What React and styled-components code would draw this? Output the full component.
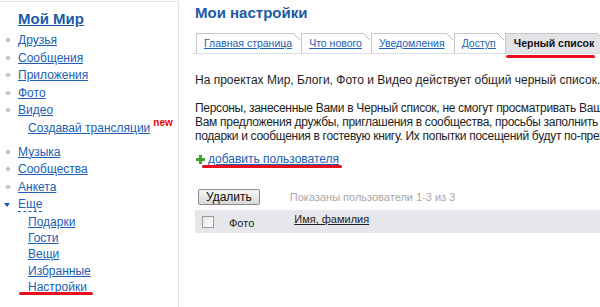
import React from "react";
import styled, { createGlobalStyle } from "styled-components";

const GlobalStyle = createGlobalStyle`
  html, body {
    margin: 0;
    padding: 0;
    background: #fff;
    overflow: hidden;
  }
  body {
    font-family: "Liberation Sans", Arial, sans-serif;
    color: #222;
  }
`;

const Page = styled.div`
  display: flex;
  width: 600px;
  height: 307px;
  overflow: hidden;
`;

const Sidebar = styled.div`
  position: relative;
  flex: 0 0 179px;
  margin-top: 1px;
  border-top: 1px solid #e2e2e2;
  border-right: 1px solid #e2e2e2;
  padding: 7px 0 0 18px;
  box-sizing: border-box;
`;

const Logo = styled.a`
  display: inline-block;
  font-size: 15px;
  font-weight: bold;
  color: #1b5aa6;
  text-decoration: underline;
  line-height: 20px;
  margin-bottom: 3px;
`;

const NavList = styled.ul`
  list-style: none;
  margin: ${(p) => p.$top || 0}px 0 0;
  padding: 0;
`;

const NavItem = styled.li`
  position: relative;
  height: 17.6px;
  line-height: 17.6px;
  font-size: 12px;
  &::before {
    content: "";
    position: absolute;
    left: -12px;
    top: 6px;
    width: 4px;
    height: 4px;
    background: #c4c4c4;
    transform: rotate(45deg);
  }
`;

const MoreItem = styled.li`
  position: relative;
  height: 17.6px;
  line-height: 17.6px;
  font-size: 12px;
  &::before {
    content: "";
    position: absolute;
    left: -14px;
    top: 7px;
    border-left: 3.5px solid transparent;
    border-right: 3.5px solid transparent;
    border-top: 4px solid #1b5aa6;
  }
`;

const SubList = styled.ul`
  list-style: none;
  margin: 0;
  padding: 0 0 0 10px;
`;

const SubItem = styled.li`
  position: relative;
  height: ${(p) => p.$h || 16.2}px;
  line-height: ${(p) => p.$h || 16.2}px;
  font-size: 12px;
  white-space: nowrap;
`;

const NavLink = styled.a`
  color: #2160b4;
  text-decoration: underline;
`;

const DashedLink = styled.a`
  color: #2160b4;
  text-decoration: none;
  border-bottom: 1px dashed #2160b4;
`;

const NewBadge = styled.span`
  position: relative;
  top: -6px;
  margin-left: 3px;
  color: #e00;
  font-weight: bold;
  font-size: 10px;
`;

const RedMark = styled.span`
  position: absolute;
  left: ${(p) => p.$left}px;
  top: ${(p) => p.$top}px;
  width: ${(p) => p.$width}px;
  height: 3px;
  border-radius: 2px;
  background: #e8101c;
`;

const Main = styled.div`
  flex: 1;
  min-width: 0;
  overflow: hidden;
  padding: 3px 0 0 16px;
`;

const Title = styled.h1`
  margin: 0;
  font-size: 15px;
  font-weight: bold;
  line-height: 20px;
  color: #1b5aa6;
`;

const TabBar = styled.div`
  display: flex;
  align-items: flex-end;
  margin: 10px 0 0 -3px;
  padding-left: 4px;
  border-bottom: 1px solid #dcdcdc;
  white-space: nowrap;
`;

const Tab = styled.a`
  position: relative;
  display: block;
  height: 19px;
  line-height: 19px;
  padding: 0 ${(p) => (p.$active ? 9 : 7)}px 0 ${(p) => (p.$active ? 8 : 7)}px;
  margin-right: 2px;
  border-top: 1px solid #c8c8c8;
  border-left: 1px solid #c8c8c8;
  background: ${(p) => (p.$active ? "#e3e4e8" : "#fff")};
  font-size: 10.5px;
  font-weight: ${(p) => (p.$active ? "bold" : "normal")};
  color: ${(p) => (p.$active ? "#111" : "#2160b4")};
  text-decoration: ${(p) => (p.$active ? "none" : "underline")};
  &::after {
    content: "";
    position: absolute;
    top: -1px;
    right: -1px;
    width: 7px;
    height: 7px;
    background: linear-gradient(
      to bottom left,
      #fff calc(50% - 0.7px),
      #b8b8b8 calc(50% - 0.7px),
      #b8b8b8 calc(50% + 0.7px),
      transparent calc(50% + 0.7px)
    );
  }
  &::before {
    content: "";
    display: ${(p) => (p.$active ? "block" : "none")};
    position: absolute;
    left: 0;
    right: 8px;
    bottom: -5px;
    height: 3px;
    border-radius: 2px;
    background: #e8101c;
  }
`;

const Text = styled.p`
  margin: ${(p) => p.$top || 0}px 0 0;
  font-size: 12px;
  line-height: 14px;
  letter-spacing: ${(p) => p.$spacing || 0}px;
  white-space: nowrap;
  color: #1e1e1e;
`;

const AddRow = styled.div`
  position: relative;
  display: flex;
  align-items: center;
  margin-top: 8px;
  height: 16px;
  font-size: 12px;
`;

const PlusIcon = styled.span`
  position: relative;
  width: 9px;
  height: 9px;
  margin: 0 3px 0 1px;
  &::before,
  &::after {
    content: "";
    position: absolute;
    background: #3aa52e;
  }
  &::before {
    left: 3px;
    top: 0;
    width: 3px;
    height: 9px;
  }
  &::after {
    left: 0;
    top: 3px;
    width: 9px;
    height: 3px;
  }
`;

const Toolbar = styled.div`
  display: flex;
  align-items: center;
  margin-top: 22px;
  padding-left: 3px;
`;

const Button = styled.button`
  height: 16px;
  padding: 0 7px;
  border: 1px solid #8c8c8c;
  border-radius: 2px;
  background: linear-gradient(#f8f8f8, #d9d9d9);
  font-family: "Liberation Sans", Arial, sans-serif;
  font-size: 12px;
  line-height: 14px;
  color: #111;
`;

const Info = styled.span`
  margin-left: 30px;
  font-size: 11px;
  color: #a8a8a8;
`;

const HeadRow = styled.div`
  display: flex;
  align-items: flex-start;
  height: 23px;
  margin-top: 5px;
  background: #e6e7eb;
  font-size: 11px;
`;

const CheckBox = styled.span`
  width: 10px;
  height: 10px;
  margin: 6px 0 0 7px;
  border: 1px solid #9a9a9a;
  background: linear-gradient(135deg, #e6e6e6, #fff);
`;

const HeadCell = styled.span`
  margin-left: ${(p) => p.$left}px;
  margin-top: ${(p) => p.$top}px;
  color: #222;
  text-decoration: ${(p) => (p.$link ? "underline" : "none")};
`;

export default function App() {
  return (
    <>
      <GlobalStyle />
      <Page>
        <Sidebar>
          <Logo>Мой Мир</Logo>
          <NavList>
            <NavItem><NavLink>Друзья</NavLink></NavItem>
            <NavItem><NavLink>Сообщения</NavLink></NavItem>
            <NavItem><NavLink>Приложения</NavLink></NavItem>
            <NavItem><NavLink>Фото</NavLink></NavItem>
            <NavItem><NavLink>Видео</NavLink></NavItem>
          </NavList>
          <SubList>
            <SubItem $h={17.6}>
              <NavLink>Создавай трансляции</NavLink>
              <NewBadge>new</NewBadge>
            </SubItem>
          </SubList>
          <NavList $top={6}>
            <NavItem><NavLink>Музыка</NavLink></NavItem>
            <NavItem><NavLink>Сообщества</NavLink></NavItem>
            <NavItem><NavLink>Анкета</NavLink></NavItem>
            <MoreItem><DashedLink>Еще</DashedLink></MoreItem>
          </NavList>
          <SubList>
            <SubItem><NavLink>Подарки</NavLink></SubItem>
            <SubItem><NavLink>Гости</NavLink></SubItem>
            <SubItem><NavLink>Вещи</NavLink></SubItem>
            <SubItem><NavLink>Избранные</NavLink></SubItem>
            <SubItem>
              <NavLink>Настройки</NavLink>
              <RedMark $left={-9} $top={13} $width={74} />
            </SubItem>
          </SubList>
        </Sidebar>
        <Main>
          <Title>Мои настройки</Title>
          <TabBar>
            <Tab>Главная страница</Tab>
            <Tab>Что нового</Tab>
            <Tab>Уведомления</Tab>
            <Tab>Доступ</Tab>
            <Tab $active>Черный список</Tab>
          </TabBar>
          <Text $top={19}>
            На проектах Мир, Блоги, Фото и Видео действует общий черный список.
          </Text>
          <Text $top={14} $spacing={-0.3}>
            Персоны, занесенные Вами в Черный список, не смогут просматривать Вашу анкету, отправлять
            <br />
            Вам предложения дружбы, приглашения в сообщества, просьбы заполнить анкету, дарить Вам
            <br />
            подарки и сообщения в гостевую книгу. Их попытки посещений будут по-прежнему видны.
          </Text>
          <AddRow>
            <PlusIcon />
            <NavLink>добавить пользователя</NavLink>
            <RedMark $left={7} $top={14} $width={140} />
          </AddRow>
          <Toolbar>
            <Button>Удалить</Button>
            <Info>Показаны пользователи 1-3 из 3</Info>
          </Toolbar>
          <HeadRow>
            <CheckBox />
            <HeadCell $left={15} $top={7}>Фото</HeadCell>
            <HeadCell $left={40} $top={3} $link>Имя, фамилия</HeadCell>
          </HeadRow>
        </Main>
      </Page>
    </>
  );
}
